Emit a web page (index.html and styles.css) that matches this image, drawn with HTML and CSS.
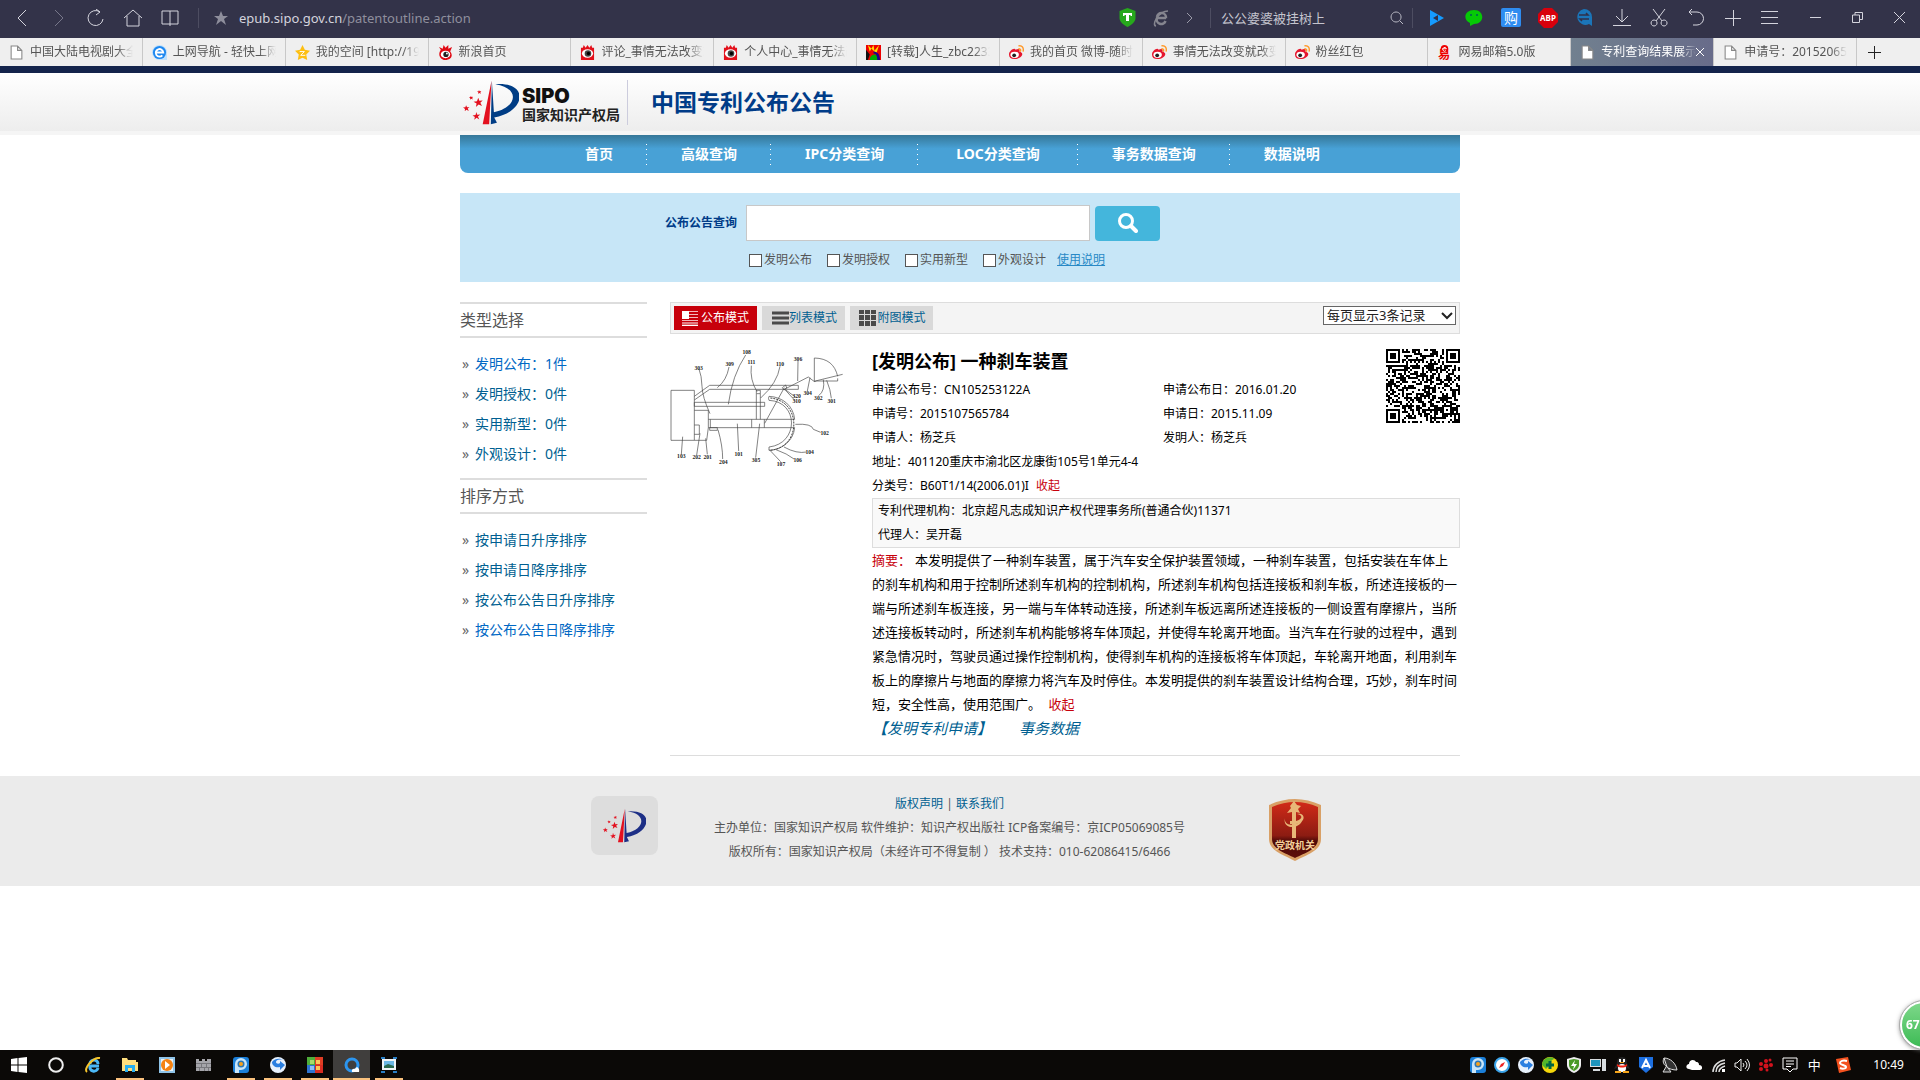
FILE: index.html
```html
<!DOCTYPE html>
<html lang="zh-CN">
<head>
<meta charset="utf-8">
<title>专利查询结果展示</title>
<link rel="stylesheet" href="styles.css">
</head>
<body>
<svg class="sprite" aria-hidden="true">
  <symbol id="doc" viewBox="0 0 12 14"><path d="M1 1h6l4 4v8H1zM7 1v4h4" fill="#fff" stroke="currentColor"/></symbol>
  <symbol id="sina" viewBox="0 0 16 16"><path d="M3 5 1 2l4 2 1-4 2 3 3-3v4l4-2-2 5c4 5 0 9-5 9S-1 11 3 5z" fill="#e00a14"/><ellipse cx="8" cy="10" rx="5" ry="4" fill="#fff"/><circle cx="8.500" cy="10" r="2.800" fill="#222"/><circle cx="9.500" cy="9" r="1" fill="#fff"/></symbol>
  <symbol id="blog" viewBox="0 0 16 16"><path d="M1 3h2l1-3 2 3 2-3 2 3 2-3 1 3h2v13H1z" fill="#e3101b"/><ellipse cx="8" cy="9" rx="6" ry="4.500" fill="#fff"/><circle cx="8.500" cy="9" r="3.500" fill="#444"/><circle cx="9" cy="9" r="1.800" fill="#000"/></symbol>
  <symbol id="weibo" viewBox="0 0 16 16"><path d="M0 10c0-4 6-8 7-5 4-2 5 0 4 2 7 2 1 8-5 8-4 0-6-2-6-5z" fill="#e6162d"/><ellipse cx="6" cy="10.500" rx="4.500" ry="3.300" fill="#fff"/><circle cx="5.500" cy="11" r="2" fill="#222"/><path d="M10 1c4-1 6 2 5 6M10 4c2 0 3 1 2 3" fill="none" stroke="#ff9a2c" stroke-width="1.500"/></symbol>
  <symbol id="pp" viewBox="0 0 16 16"><rect width="16" height="16" rx="3" fill="#1b7fd8"/><path d="M2 16V7a6 6 0 1 1 6 6H6v3z" fill="#c9e6fa"/><circle cx="8" cy="7" r="3.500" fill="#2c76b5"/><circle cx="8" cy="7" r="2" fill="#f8a11c"/></symbol>
  <symbol id="swirl" viewBox="0 0 16 16"><circle cx="8" cy="8" r="8" fill="#e8f1fc"/><path d="M2 5c3-4 8-4 11-2-4-1-7 0-7 2s3 2 4 1V4l5 4-5 5v-3C6 11 2 9 2 5z" fill="#2b7fe0"/></symbol>
  <symbol id="emblem" viewBox="0 0 168 132"><g fill="#e3101f"><path d="m87 2-7 128H61zM48 52l3 9 10-1-7 7 5 9-10-4-8 7 2-10-9-5 10-2zM12 74l3 6 7-1-5 5 3 7-7-4-5 5 1-7-6-4 7-1zM42 94l3 8 9-1-7 6 4 9-8-5-7 6 2-8-7-5 9-1zM26 46l2 4 5-1-3 4 2 4-5-2-3 3v-5l-4-2 5-1zM50 29l2 4 5-1-3 4 2 4-5-2-3 3v-5l-4-2 5-1z"/></g><path d="m88 2 6 93c70-15 78-72 4-83 105-8 87 84-3 98l8 16-18 4z" fill="currentColor"/></symbol>
</svg>

<header class="browser">
  <div class="bar">
    <nav class="controls" aria-label="浏览器">
      <button aria-label="后退"><svg width="12" height="18" viewBox="0 0 12 18"><path d="m10 1-8 8 8 8"/></svg></button>
      <button class="dim" aria-label="前进"><svg width="12" height="18" viewBox="0 0 12 18"><path d="m2 1 8 8-8 8"/></svg></button>
      <button aria-label="刷新"><svg width="18" height="18" viewBox="0 0 18 18"><path d="M13 3a7.500 7.500 0 1 0 3 7M9 0l4 3-4 3"/></svg></button>
      <button aria-label="主页"><svg width="20" height="18" viewBox="0 0 20 18"><path d="m1 9 9-8 9 8M4 7v10h12V7"/></svg></button>
      <button aria-label="收藏夹"><svg width="18" height="16" viewBox="0 0 18 16"><path d="M1 1h16v13H1zM9 1v15"/></svg></button>
    </nav>
    <i class="rule"></i>
    <svg class="star" width="14" height="14" viewBox="0 0 14 14"><path d="m7 0 2 5h5l-4 3 2 6-5-4-5 4 2-6-4-3h5z" fill="#8e8e9c"/></svg>
    <div class="url">epub.sipo.gov.cn<span>/patentoutline.action</span></div>
    <div class="site">
      <svg width="17" height="19" viewBox="0 0 17 19"><path d="m8.500 0 8 3v7c0 4-4 7-8 9-4-2-8-5-8-9V3z" fill="#27a81c"/><path d="M4 5h9v3h-1.500V7H10v6H7V7H5.500v1H4z" fill="#fff"/></svg>
      <svg width="18" height="18" viewBox="0 0 18 18"><path d="M14 9H5a4.500 4.500 0 0 0 8.500 3M5 8a4.500 4.500 0 0 1 9 1" fill="none" stroke="#85858f" stroke-width="2.500"/><path d="M4 17c-5-1 3-15 12-15" fill="none" stroke="#85858f" stroke-width="1.500"/></svg>
      <svg width="7" height="12" viewBox="0 0 7 12"><path d="m1 1 5 5-5 5" fill="none" stroke="#9a9aa8"/></svg>
    </div>
    <i class="rule"></i>
    <label class="quick"><input type="text" aria-label="搜索" value="公公婆婆被挂树上"><svg width="14" height="14" viewBox="0 0 14 14"><path d="M10 10l3 3M6 1a5 5 0 1 0 .1 0z" fill="none" stroke="#bbbbc6"/></svg></label>
    <i class="rule"></i>
    <div class="tools">
      <button aria-label="视频"><svg width="16" height="18" viewBox="0 0 16 18"><path d="m1 1 14 8-14 8z" fill="#159bff"/><path d="M4 9l5-3v6z" fill="#303049"/></svg></button>
      <button aria-label="微信"><svg width="18" height="18" viewBox="0 0 18 18"><path d="M9 1c11 0 11 14 0 14l-4 2v-3C-3 10 0 1 9 1z" fill="#06c906"/><path d="M5 5h2v2H5zM11 5h2v2h-2z" fill="#074"/></svg></button>
      <button aria-label="购物"><svg width="20" height="19" viewBox="0 0 20 19"><rect width="20" height="19" rx="2" fill="#2f8cf0"/><text x="3" y="15" font-size="14" fill="#fff">购</text></svg></button>
      <button aria-label="广告过滤"><svg width="20" height="20" viewBox="0 0 20 20"><path d="M6 0h8l6 6v8l-6 6H6l-6-6V6z" fill="#d8000c"/><text x="10" y="13" font-size="8" font-weight="700" text-anchor="middle" fill="#fff">ABP</text></svg></button>
      <button aria-label="切换"><svg width="19" height="19" viewBox="0 0 19 19"><path d="M9 1a8 8 0 1 0 5 15l3 2v-9a8 8 0 0 0-8-8z" fill="#1b75b8"/><path d="M4 7h9l-2-2M14 11H5l2 2" stroke="#303049" stroke-width="1.500" fill="none"/></svg></button>
      <button aria-label="下载"><svg width="18" height="18" viewBox="0 0 18 18"><path d="M9 0v12M3 7l6 6 6-6M0 16.500h18"/></svg></button>
      <button aria-label="截图"><svg width="18" height="18" viewBox="0 0 18 18"><path d="m3 0 9 12M15 0 6 12M4 11a3 3 0 1 0 .1 0zM14 11a3 3 0 1 0 .1 0z"/></svg></button>
      <button aria-label="恢复"><svg width="18" height="18" viewBox="0 0 18 18"><path d="M2 3h8a6 6 0 0 1 0 13H6M5 0 2 3l3 3"/></svg></button>
      <button aria-label="添加"><svg width="16" height="16" viewBox="0 0 16 16"><path d="M8.500 0v16M0 8.500h16"/></svg></button>
      <button aria-label="菜单"><svg width="17" height="15" viewBox="0 0 17 15"><path d="M0 1.500h17M0 7.500h17M0 13.500h17"/></svg></button>
    </div>
    <div class="window">
      <button aria-label="最小化"><svg width="11" height="11" viewBox="0 0 11 11"><path d="M0 5.500h11"/></svg></button>
      <button aria-label="还原"><svg width="11" height="11" viewBox="0 0 11 11"><path d="M.5 3h7v7.500h-7zM3 3V.5h7.500v7H8"/></svg></button>
      <button aria-label="关闭"><svg width="11" height="11" viewBox="0 0 11 11"><path d="m0 0 11 11M11 0 0 11"/></svg></button>
    </div>
  </div>
  <div class="tabs">
    <a href="#" class="tab"><svg class="fav"><use href="#doc"/></svg><span>中国大陆电视剧大全</span></a>
    <a href="#" class="tab"><svg class="fav" viewBox="0 0 16 16"><path d="M8 0a8 8 0 1 0 0 16h8V8a8 8 0 0 0-8-8z" fill="#bfe0fb"/><circle cx="8" cy="8" r="7" fill="#1e88f0"/><path d="M11 11a4 4 0 1 1 1-3H5" fill="none" stroke="#fff" stroke-width="2"/></svg><span>上网导航 - 轻快上网</span></a>
    <a href="#" class="tab"><svg class="fav" viewBox="0 0 16 16"><path d="m8 0 2.500 5 5.500 1-4 4 1 6-5-2.500L3 16l1-6-4-4 5.500-1z" fill="#fdbf12"/><path d="M5 7h5l-4 4h5" stroke="#fff" fill="none"/></svg><span>我的空间 [http://19</span></a>
    <a href="#" class="tab"><svg class="fav"><use href="#sina"/></svg><span>新浪首页</span></a>
    <a href="#" class="tab"><svg class="fav"><use href="#blog"/></svg><span>评论_事情无法改变就</span></a>
    <a href="#" class="tab"><svg class="fav"><use href="#blog"/></svg><span>个人中心_事情无法改</span></a>
    <a href="#" class="tab"><svg class="fav" viewBox="0 0 16 16"><path d="M0 0h16v16H0z" fill="#e00"/><path d="m2 0 2 7 4-7 1 6 5-6-3 9z" fill="#fd0"/><path d="M0 5l4 5-2 6H0z" fill="#111"/><path d="M4 16a5 6 0 0 1 10 0z" fill="#0a0"/><path d="M8 7c5 0 7 4 7 9h-3c0-4-1-7-4-7z" fill="#208"/></svg><span>[转载]人生_zbc2233</span></a>
    <a href="#" class="tab"><svg class="fav"><use href="#weibo"/></svg><span>我的首页 微博-随时随</span></a>
    <a href="#" class="tab"><svg class="fav"><use href="#weibo"/></svg><span>事情无法改变就改变自</span></a>
    <a href="#" class="tab"><svg class="fav"><use href="#weibo"/></svg><span>粉丝红包</span></a>
    <a href="#" class="tab"><svg class="fav" viewBox="0 0 16 16"><text x="1" y="15" font-size="13" font-weight="700" fill="#e00">易</text><circle cx="8" cy="4" r="4" fill="#e00"/><path d="M6 4h4M9.500 6A2 2 0 1 1 10 4" stroke="#fff" fill="none"/></svg><span>网易邮箱5.0版</span></a>
    <a href="#" class="tab active"><svg class="fav"><use href="#doc"/></svg><span>专利查询结果展示</span><svg class="x" width="8" height="8" viewBox="0 0 8 8"><path d="m0 0 8 8M8 0 0 8" stroke="#fff"/></svg></a>
    <a href="#" class="tab"><svg class="fav"><use href="#doc"/></svg><span>申请号：201520652</span></a>
    <button class="new" aria-label="新标签页"><svg width="14" height="14" viewBox="0 0 14 14"><path d="M7.500 1v13M1 7.500h13" stroke="#222"/></svg></button>
  </div>
</header>

<div class="page">
  <div class="masthead">
    <div class="wrap brand">
      <svg class="mark" width="57" height="45"><use href="#emblem"/></svg>
      <div class="name"><b>SIPO</b><span>国家知识产权局</span></div>
      <h1>中国专利公布公告</h1>
    </div>
  </div>
  <div class="wrap">
    <nav class="menu">
      <a href="#">首页</a><a href="#">高级查询</a><a href="#">IPC分类查询</a><a href="#" class="wide">LOC分类查询</a><a href="#">事务数据查询</a><a href="#">数据说明</a>
    </nav>
    <form class="search">
      <div class="query">
        <label for="q">公布公告查询</label>
        <input id="q" type="text">
        <button type="button" aria-label="查询"><svg width="20" height="20" viewBox="0 0 20 20"><circle cx="8" cy="8" r="6.500" fill="none" stroke="#fff" stroke-width="3"/><path d="m13 13 5 5" stroke="#fff" stroke-width="4" stroke-linecap="round"/></svg></button>
      </div>
      <div class="kinds">
        <label><input type="checkbox">发明公布</label>
        <label><input type="checkbox">发明授权</label>
        <label><input type="checkbox">实用新型</label>
        <label><input type="checkbox">外观设计</label>
        <a href="#">使用说明</a>
      </div>
    </form>

    <div class="columns">
      <aside>
        <h2>类型选择</h2>
        <ul>
          <li><a href="#" class="on">发明公布：1件</a></li>
          <li><a href="#">发明授权：0件</a></li>
          <li><a href="#">实用新型：0件</a></li>
          <li><a href="#">外观设计：0件</a></li>
        </ul>
        <h2>排序方式</h2>
        <ul>
          <li><a href="#">按申请日升序排序</a></li>
          <li><a href="#">按申请日降序排序</a></li>
          <li><a href="#">按公布公告日升序排序</a></li>
          <li><a href="#" class="on">按公布公告日降序排序</a></li>
        </ul>
      </aside>

      <main>
        <div class="modes">
          <button class="current"><svg width="16" height="15" viewBox="0 0 16 15"><path d="M0 .5h16M0 3.500h16M0 6.500h16M0 9.500h16M0 14h16" stroke="#f2b8bb"/><path d="M0 0h7v8H0z" fill="#fff"/><path d="M0 12h16M0 14.500h16" stroke="#fff"/></svg>公布模式</button>
          <button class="tight"><svg width="17" height="14" viewBox="0 0 17 14"><path d="M0 2h17M0 7h17M0 12h17" stroke="#4a4a4a" stroke-width="3"/></svg>列表模式</button>
          <button class="tight"><svg width="18" height="16" viewBox="0 0 18 16"><path d="M0 0h5v4H0zM6 0h5v4H6zM12 0h5v4h-5zM0 5h5v5H0zM6 5h5v5H6zM12 5h5v5h-5zM0 11h5v5H0zM6 11h5v5H6zM12 11h5v5h-5z" fill="#4a4a4a"/></svg>附图模式</button>
          <span class="pager"><select aria-label="每页记录数"><option>每页显示3条记录</option></select><svg width="12" height="8" viewBox="0 0 12 8"><path d="m1 1 5 5 5-5" fill="none" stroke="#222" stroke-width="2"/></svg></span>
        </div>

        <article>
          <svg class="figure" viewBox="30 27 525 381" fill="none" stroke="#444" stroke-width="2">
            <path d="M33 166h70v150H33zM103 184l46-33h266v12H149l-46 32M103 202h211v12H103zM103 226h42v52l-5 38h-37M103 270h15v28h-15M145 253h259M145 278h259M151 253v25M275 253v25M313 253v25M149 278h23v8h-23zM289 166h12v87M289 166v87M290 176h10M314 265l59-107M373 163l72-37 17 13 86-21M462 140l8-2h63v-8M463 138V69c40 1 62 20 70 55M367 158l10-8 3 9-8 6zM327 184q-3 6 0 12c90 4 90 130 0 140v10M404 253c-4-40-35-67-77-69M404 278c-4 40-37 66-77 68"/>
            <path d="M331 189c94 9 94 148 0 157" stroke-dasharray="6 3" stroke-width="3"/>
            <path d="M117 102q8 20 9 52t24 82M207 96q-7 40-35 62M257 60q-40 60-52 148M274 92q-5 42 17 78M360 94q-8 50-58 95M414 78l-1 60M442 168l8-40M476 182q20-15 14-48M514 190q-2-25-14-54M406 186l-30-22M408 200l-34-37M406 268q50-3 54 15l22 9M64 358l4-53M110 360l10-65M142 358l-5-48M188 372q0-40-14-88M236 348l-4-82M287 368l12-102M362 380l-34-36M402 372q-20-16-54-28M440 351q-30 6-68-15"/>
            <g fill="#222" stroke="none" font-size="17" font-weight="700" text-anchor="middle">
              <text x="260" y="58">108</text><text x="274" y="88">111</text><text x="360" y="92">110</text><text x="116" y="104">303</text><text x="209" y="94">309</text><text x="414" y="77">306</text><text x="443" y="180">304</text><text x="475" y="194">302</text><text x="515" y="203">301</text><text x="410" y="189">320</text><text x="410" y="205">310</text><text x="494" y="299">102</text><text x="64" y="370">103</text><text x="110" y="373">202</text><text x="143" y="373">201</text><text x="190" y="386">204</text><text x="236" y="362">101</text><text x="288" y="382">305</text><text x="363" y="393">107</text><text x="413" y="380">106</text><text x="449" y="357">104</text>
            </g>
          </svg>
          <div class="detail">
            <div class="top">
              <div class="facts">
                <h3>[发明公布] 一种刹车装置</h3>
                <ul>
                  <li>申请公布号：CN105253122A</li><li>申请公布日：2016.01.20</li>
                  <li>申请号：2015107565784</li><li>申请日：2015.11.09</li>
                  <li>申请人：杨芝兵</li><li>发明人：杨芝兵</li>
                </ul>
              </div>
              <svg id="qr" width="74" height="74" viewBox="0 0 37 37" shape-rendering="crispEdges" role="img" aria-label="二维码"></svg>
            </div>
            <p>地址：401120重庆市渝北区龙康街105号1单元4-4</p>
            <p>分类号：B60T1/14(2006.01)I <a href="#" class="fold">收起</a></p>
            <div class="agency">
              <p>专利代理机构：北京超凡志成知识产权代理事务所(普通合伙)11371</p>
              <p>代理人：吴开磊</p>
            </div>
            <p class="abstract"><b>摘要：</b>本发明提供了一种刹车装置，属于汽车安全保护装置领域，一种刹车装置，包括安装在车体上的刹车机构和用于控制所述刹车机构的控制机构，所述刹车机构包括连接板和刹车板，所述连接板的一端与所述刹车板连接，另一端与车体转动连接，所述刹车板远离所述连接板的一侧设置有摩擦片，当所述连接板转动时，所述刹车机构能够将车体顶起，并使得车轮离开地面。当汽车在行驶的过程中，遇到紧急情况时，驾驶员通过操作控制机构，使得刹车机构的连接板将车体顶起，车轮离开地面，利用刹车板上的摩擦片与地面的摩擦力将汽车及时停住。本发明提供的刹车装置设计结构合理，巧妙，刹车时间短，安全性高，使用范围广。 <a href="#" class="fold">收起</a></p>
            <p class="links"><a href="#">【发明专利申请】</a><a href="#">事务数据</a></p>
          </div>
        </article>
      </main>
    </div>
  </div>

  <footer>
    <span class="tile"><svg width="44" height="35"><use href="#emblem"/></svg></span>
    <div class="legal">
      <p><a href="#">版权声明</a> | <a href="#">联系我们</a></p>
      <p>主办单位：国家知识产权局 软件维护：知识产权出版社 ICP备案编号：京ICP05069085号</p>
      <p>版权所有：国家知识产权局（未经许可不得复制 ） 技术支持：010-62086415/6466</p>
    </div>
    <svg class="badge" width="54" height="64" viewBox="0 0 54 64"><defs><linearGradient id="red" x2="0" y2="1"><stop stop-color="#d12a18"/><stop offset=".6" stop-color="#8c1c12"/><stop offset=".7" stop-color="#4d0a08"/><stop offset="1" stop-color="#5e0e0a"/></linearGradient></defs><path d="M1 7Q27-5 53 7v34c0 12-15 16-26 22C16 57 1 53 1 41z" fill="#d9a066"/><path d="M4 9Q27-1 50 9v32c0 10-13 14-23 19C17 55 4 51 4 41z" fill="url(#red)"/><path d="M24 40V26h-2v-3h2v-9l-5 1 4-5-1-2 4-5 3 4 4 1-3 3 2 4-4-1v9c7-2 7-6 1-7 8-2 10 8-1 10v14z" fill="#e8b878"/><path d="M17 20c-1 6 5 10 17 3-4 9-20 8-17-3z" fill="#e8b878"/><text x="27" y="51" text-anchor="middle" font-size="10" font-weight="700" fill="#f3cf9a">党政机关</text></svg>
  </footer>
</div>

<div class="speed">67</div>

<div class="taskbar">
  <div class="apps">
    <button aria-label="开始"><svg viewBox="0 0 16 16"><path d="m0 2 6.500-1v6.500H0zM7.500 1 16 0v7.500H7.500zM0 8.500h6.500V15L0 14zM7.500 8.500H16V16l-8.500-1z" fill="#fff"/></svg></button>
    <button aria-label="搜索"><svg viewBox="0 0 16 16"><circle cx="8" cy="8" r="6.800" fill="none" stroke="#eee" stroke-width="2"/></svg></button>
    <button aria-label="Internet Explorer"><svg viewBox="0 0 16 16"><path d="M14 9H5a4 4 0 0 0 8 2M5 7a4 4 0 0 1 8 0" fill="none" stroke="#4bb7f5" stroke-width="3"/><path d="M2 15C-2 12 8 0 15 1" fill="none" stroke="#f7c52b" stroke-width="2"/></svg></button>
    <button class="run" aria-label="文件资源管理器"><svg viewBox="0 0 16 16"><path d="M0 1h5l1 2h8v2h2v9H0z" fill="#ffdf7e"/><path d="M3 15V8h10v7h-3v-4H6v4z" fill="#27aef0"/></svg></button>
    <button aria-label="播放器"><svg viewBox="0 0 16 16"><path d="M0 0h16v16H0z" fill="#8fc3e8"/><path d="M2 2h12v12H2z" fill="#e8f2fa"/><circle cx="8" cy="8" r="6" fill="#f58313"/><path d="m6 4 5 4-5 4z" fill="#fff"/></svg></button>
    <button aria-label="游戏"><svg viewBox="0 0 16 16"><path d="M0 2h3v2h3V2h3v2h2V2h4v12H0z" fill="#a5a5aa"/><path d="M0 6.500h15M0 10.500h15M5.500 6v4M10.500 6v4M3.500 10v4M8.500 10v4M12.500 10v4" stroke="#77777c"/></svg></button>
    <button class="run" aria-label="PP助手"><svg><use href="#pp"/></svg></button>
    <button class="run" aria-label="搜狗浏览器"><svg><use href="#swirl"/></svg></button>
    <button class="run" aria-label="卡片"><svg viewBox="0 0 16 16"><path d="M0 0h8v8H0z" fill="#4fae3a"/><path d="M8 0h8v8H8z" fill="#e03d24"/><path d="M0 8h8v8H0z" fill="#2e74d2"/><path d="M8 8h8v8H8z" fill="#d92c22"/><path d="M3 3h4v4H3z" fill="#a5dc6a"/><path d="M9 3h4v4H9zM9 9h4v4H9z" fill="#fbc65a"/><path d="M3 9h4v4H3z" fill="#8fc0f2"/></svg></button>
    <button class="run focus" aria-label="QQ浏览器"><svg viewBox="0 0 16 16"><circle cx="8" cy="8" r="6" fill="none" stroke="#2c95ef" stroke-width="3"/><path d="M8 15c-1-3 2-4 3-3 2-4 5 0 4 3z" fill="#fff"/></svg></button>
    <button class="run" aria-label="图片"><svg viewBox="0 0 16 16"><path d="M0 1h4M12 1h4M0 15h4M12 15h4" stroke="#2b7fc4" stroke-width="2"/><path d="M1 2h14v11H1z" fill="#f0f5f8"/><path d="M3 4h10v7H3z" fill="#6cb8e6"/><path d="m3 9 4-2 6 2v2H3z" fill="#2c6b50"/></svg></button>
  </div>
  <div class="tray">
    <svg><use href="#pp"/></svg>
    <svg viewBox="0 0 16 16"><circle cx="8" cy="8" r="7" fill="#fff" stroke="#3ba4ea" stroke-width="2"/><path d="m5 11 2-4 4-2-2 4z" fill="#e22"/></svg>
    <svg><use href="#swirl"/></svg>
    <svg viewBox="0 0 16 16"><circle cx="8" cy="8" r="8" fill="#f6d70b"/><path d="M0 8a8 8 0 0 1 13-6C8 2 9 8 4 12z" fill="#53b52b"/><path d="M8 4v8M4 8h8" stroke="#064" stroke-width="3"/></svg>
    <svg viewBox="0 0 16 16"><path d="m8 0 7 2v6c0 4-4 7-7 8-3-1-7-4-7-8V2z" fill="#eee"/><path d="m8 2 5 1v5c0 3-3 5-5 6-2-1-5-3-5-6V3z" fill="#4b9a28"/><path d="M9 3 5 9h3l-1 4 4-6H8z" fill="#fff"/></svg>
    <svg viewBox="0 0 16 16"><path d="M0 2h11v8H0zM12 2h4v12h-4zM3 12h7v2H3z" fill="#d8dde0"/><path d="M1 3h9v6H1z" fill="#1f95bd"/></svg>
    <svg viewBox="0 0 16 16"><path d="M8 0c4 0 5 3 5 6l3 6-3-1c0 6-10 6-10 0l-3 1 3-6c0-3 1-6 5-6z" fill="#222"/><ellipse cx="8" cy="11" rx="4" ry="4" fill="#fff"/><path d="M3 7c3 2 7 2 10 0v2c-3 2-7 2-10 0z" fill="#e21"/><path d="M5 2h2v3H5zM9 2h2v3H9z" fill="#fff"/><path d="M6 5h4v1H6zM1 14h6v2H1zM9 14h6v2H9z" fill="#f7a61c"/></svg>
    <svg viewBox="0 0 16 16"><path d="M1 0h14v10l-7 6-7-6z" fill="#1d6fe0"/><path d="m4 11 4-8 4 8M6 9h4" fill="none" stroke="#fff" stroke-width="2"/></svg>
    <svg viewBox="0 0 16 16"><path d="M2 1c-2 4 0 7 3 9M2 1c6 0 12 5 13 12-4 0-8-1-10-3zM4 10l-3 5h8l-3-4" fill="#333" stroke="#ddd"/></svg>
    <svg viewBox="0 0 16 16"><path d="M3 12c-4 0-3-5 0-5 0-5 6-5 7-2 3 0 3 2 3 3 4 0 4 5 1 5H6z" fill="#fff"/></svg>
    <svg viewBox="0 0 16 16"><path d="M3 15C3 9 8 4 15 3M6 15c0-5 4-8 9-9M9 15c0-3 3-5 6-6" fill="none" stroke="#ddd" stroke-width="1.500"/><path d="M12 12h3v3h-3z" fill="#fff"/></svg>
    <svg viewBox="0 0 16 16"><path d="M1 6h2l4-4v12l-4-4H1zM9 6q2 2 0 4M11 4q4 4 0 8M13 2q5 6 0 12" fill="none" stroke="#eee"/></svg>
    <svg viewBox="0 0 16 16" fill="#d3121d"><circle cx="3" cy="7" r="2"/><circle cx="8" cy="4" r="2"/><circle cx="12" cy="3" r="1.500"/><circle cx="8" cy="9" r="2.500"/><circle cx="13" cy="8" r="2"/><circle cx="3" cy="12" r="2"/><circle cx="9" cy="13" r="1.500"/></svg>
    <svg viewBox="0 0 16 16"><path d="M1 1h14v11h-4l-3 3-3-3H1zM4 4h8M4 7h8M4 9.500h5" fill="none" stroke="#fff"/></svg>
    <span class="ime">中</span>
    <svg class="sogou" viewBox="0 0 16 16"><path d="m1 2 12-2 3 13-12 3z" fill="#f4511e"/><path d="M12 4c-4-1-7 0-7 2s6 2 6 4-4 2-6 1" fill="none" stroke="#fff" stroke-width="2"/></svg>
    <time>10:49</time>
  </div>
</div>
<script src="qr.js"></script>
</body>
</html>
```

FILE: styles.css
```css
* { box-sizing: border-box; }
body {
  margin: 0;
  min-height: 100vh;
  display: flex;
  flex-direction: column;
  background: #fff;
  color: #000;
  font: 12px/24px "Noto Sans", "Noto Sans CJK SC", sans-serif;
  text-spacing-trim: space-all;
  overflow-x: hidden;
}
h1, h2, h3, p, ul { margin: 0; padding: 0; }
ul { list-style: none; }
a { color: #005f91; text-decoration: none; }
button, input, select { font: inherit; margin: 0; }
button { border: 0; padding: 0; background: none; color: inherit; display: flex; align-items: center; justify-content: center; }
svg { flex: none; }
.sprite { display: none; }

/* browser window */
.bar { display: flex; align-items: center; height: 37px; padding-bottom: 2px; background: #333349; color: #d4d4dd; }
.bar button svg { fill: none; stroke: #d4d4dd; }
.controls { display: flex; padding-left: 3px; }
.controls button { width: 37px; height: 35px; }
.controls .dim svg { stroke: #77778a; }
.rule { width: 1px; height: 20px; background: #4d4d61; }
.controls + .rule { margin-left: 10px; }
.star { margin: 0 11px 0 15px; }
.url { flex: 1; font-size: 13px; }
.url span { color: #8f8f9d; }
.site { display: flex; align-items: center; gap: 16px; padding-right: 17px; }
.quick { display: flex; align-items: center; width: 201px; padding: 0 8px 0 10px; }
.quick input { flex: 1; min-width: 0; border: 0; padding: 0; background: none; color: #c4c4ce; font-size: 13px; }
.tools { display: flex; padding-left: 5px; }
.tools button { width: 37px; height: 35px; }
.tools button:nth-child(-n+5) svg { stroke: none; }
.window { display: flex; padding: 0 0 0 6px; }
.window button { width: 42px; height: 35px; }

.tabs { display: flex; height: 36px; background: #efefef; border-top: 1px solid #333349; border-bottom: 7px solid #14244c; padding-right: 29px; }
.tab { flex: 1; min-width: 0; display: flex; align-items: center; gap: 6px; padding: 0 9px; border-right: 1px solid #c8c8c8; color: #555; }
.tab span { flex: 1; overflow: hidden; white-space: nowrap; mask-image: linear-gradient(to right, #000 84%, transparent); }
.fav { width: 15px; height: 15px; color: #888; }
.active { background: linear-gradient(to right, #71808f, #686c8a); color: #fff; }
.active .x { margin-left: -6px; }
.new { width: 34px; }

/* site header */
.page { flex: 1; }
.wrap { max-width: 1000px; margin: 0 auto; }
.masthead { background: linear-gradient(#fff, #ededed 94%, #f5f5f5 94%); }
.brand { display: flex; align-items: center; height: 62px; padding-bottom: 4px; }
.mark { margin-left: 2px; color: #003d85; }
.name { display: flex; flex-direction: column; width: 109px; height: 45px; padding: 6px 0 0 3px; border-right: 1px solid #ccd; }
.name b { font: 900 20px/20px Inter, sans-serif; color: #111; }
.name span { font-size: 14px; line-height: 18px; font-weight: 700; color: #222; }
.brand h1 { margin-left: 23px; font-size: 23px; line-height: 32px; color: #003c88; }
.menu { display: flex; align-items: center; height: 38px; padding-left: 91px; background: linear-gradient(#357798, #48a1d6 36%); border-radius: 0 0 8px 8px; }
.menu a { padding: 0 34px; font-size: 14px; font-weight: 700; color: #fff; background: repeating-linear-gradient(#fff 0 1px, transparent 1px 5px) right / 1px 21px no-repeat; }
.menu .wide { padding: 0 38px; }
.menu a:last-child { background: none; }

.search { margin: 20px 0; height: 89px; padding-top: 12px; background: #c7e6f7; }
.query { display: flex; align-items: center; padding-left: 205px; }
.query label { font-weight: 700; color: #003c88; margin-right: 9px; }
.query input { width: 344px; height: 36px; border: 1px solid #c8c8c8; background: #fff; margin-right: 5px; }
.query button { width: 65px; height: 35px; border-radius: 4px; background: #44b6dc; }
.kinds { display: flex; gap: 15px; padding: 7px 0 0 289px; color: #555; }
.kinds label { display: flex; align-items: center; gap: 2px; }
.kinds input { appearance: none; width: 13px; height: 13px; border: 1px solid #555; background: #fff; }
.kinds a { margin-left: -4px; color: #2889c6; text-decoration: underline; }

/* two columns */
.columns { display: flex; gap: 23px; }
aside { width: 187px; }
aside h2 { border: solid #ddd; border-width: 2px 0; font-size: 16px; font-weight: 400; line-height: 32px; color: #555; }
aside ul { padding: 11px 0 9px; }
aside li { display: flex; line-height: 30px; font-size: 14px; }
aside li::before { content: "»"; width: 15px; padding-left: 2px; color: #666; }
aside li a { margin-left: -2px; }
.on { color: #0068c4; }
main { flex: 1; min-width: 0; }
.modes { display: flex; align-items: center; gap: 5px; height: 32px; padding: 0 3px; border: 1px solid #ddd; background: #f4f4f4; }
.modes button { width: 83px; height: 24px; gap: 3px; background: #d9d9d9; color: #005f91; }
.modes .current { background: #c7000b; color: #fff; }
.modes .tight { gap: 0; padding-left: 2px; }
.pager { position: relative; margin: 0 0 5px auto; height: 19px; }
.pager select { display: block; appearance: none; width: 133px; height: 19px; padding: 0 3px; border: 1px solid #666; border-radius: 0; background: #fff; color: #222; font-size: 13px; line-height: 17px; }
.pager svg { position: absolute; right: 3px; top: 6px; }

article { display: flex; gap: 27px; padding: 10px 0 15px; margin-bottom: 20px; border-bottom: 1px solid #ddd; }
.figure { width: 175px; height: 127px; font-family: "Liberation Serif", serif; }
.detail { flex: 1; min-width: 0; }
.top { display: flex; align-items: flex-start; }
.facts { flex: 1; }
.facts h3 { font-size: 18px; line-height: 34px; }
.facts ul { display: grid; grid-template-columns: 291px 1fr; }
#qr { margin-top: 5px; }
.fold { color: #c7000b; margin-left: 4px; }
.agency { padding: 0 5px; border: 1px solid #ddd; background: #f9f9f9; }
.abstract { font-size: 13px; }
.abstract b { font-weight: 400; color: #c7000b; margin-right: 4px; }
.links { display: flex; gap: 27px; font-size: 15px; font-style: italic; }

footer { display: flex; justify-content: center; align-items: flex-start; padding: 16px 8px 22px 0; background: #ebebeb; color: #555; }
.tile { display: flex; align-items: center; justify-content: center; width: 67px; height: 59px; margin-top: 4px; border-radius: 8px; background: #ddd; color: #1d2f86; }
.legal { width: 584px; margin: 0 13px; padding-right: 26px; text-align: center; }
.badge { margin: 6px 0 0; }

/* desktop */
.speed { position: fixed; right: -28px; bottom: 31px; width: 48px; height: 48px; padding-left: 4px; border: 2px solid #fff; border-radius: 50%; outline: 1px solid #aaa; background: linear-gradient(#7ed88a, #3dbb55); box-shadow: 0 1px 5px #777; color: #fff; font-weight: 700; line-height: 44px; }
.taskbar { display: flex; justify-content: space-between; height: 30px; background: #0b0907; color: #fff; }
.apps { display: flex; }
.apps button { width: 37px; }
.apps svg, .tray svg { width: 16px; height: 16px; }
.apps button.run { background: linear-gradient(#fbc27e, #fbc27e) bottom / 28px 2px no-repeat; }
.apps button.focus { background: linear-gradient(#fbc27e, #fbc27e) bottom / 100% 2px no-repeat #403e3d; }
.tray { display: flex; align-items: center; gap: 8px; padding-right: 16px; }
.tray .sogou { margin: 0 14px 0 5px; }
.ime { width: 16px; font-size: 13px; text-align: center; }
```

FILE: qr.js
```js
// Builds the QR tile: 37 x 37 modules with finder, timing and alignment patterns.
const size = 37;
let seed = 105253122;
const random = () => (seed = (seed * 1103515245 + 12345) % 2147483648) / 2147483648;
const ring = (x, y, cx, cy) => Math.max(Math.abs(x - cx), Math.abs(y - cy));
const finders = [[3, 3], [33, 3], [3, 33]];
let d = "";
for (let y = 0; y < size; y++) {
  for (let x = 0; x < size; x++) {
    let dark = random() < 0.5;
    if (x === 6) dark = y % 2 === 0;
    if (y === 6) dark = x % 2 === 0;
    if (ring(x, y, 30, 30) < 3) dark = ring(x, y, 30, 30) !== 1;
    for (const [cx, cy] of finders) {
      const r = ring(x, y, cx, cy);
      if (r <= 4) dark = r < 2 || r === 3;
    }
    if (dark) d += `M${x} ${y}h1v1h-1z`;
  }
}
document.getElementById("qr").innerHTML = `<path d="${d}"/>`;
```
